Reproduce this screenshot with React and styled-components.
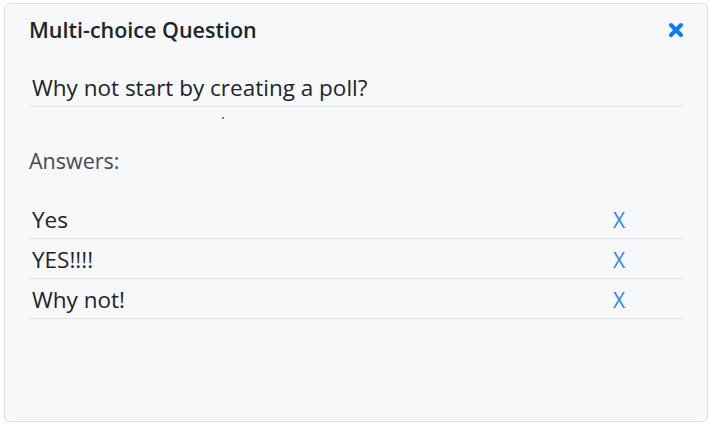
import styled, { createGlobalStyle } from "styled-components"

const GlobalStyle = createGlobalStyle`
  body {
    margin: 0;
    font-family: "Open Sans", "Noto Sans", sans-serif;
    color: #212529;
    background: #fff;
  }
  * {
    box-sizing: border-box;
  }
`

const Page = styled.div`
  padding: 3px 1px 4px 4px;
`

const Card = styled.div`
  height: 419px;
  background: #f7f8fa;
  border: 1px solid #dcdfe3;
  border-radius: 5px;
  padding: 11px 23px 0 24px;
  display: flex;
  flex-direction: column;
`

const Header = styled.div`
  display: flex;
  align-items: center;
  justify-content: space-between;
  height: 30px;
`

const Title = styled.h5`
  margin: 0;
  font-size: 21.5px;
  font-weight: 600;
  line-height: 30px;
  color: #212529;
`

const CloseButton = styled.button`
  border: 0;
  background: none;
  padding: 0;
  width: 16px;
  height: 16px;
  display: flex;
  cursor: pointer;
`

const QuestionInput = styled.input`
  margin-top: 23px;
  height: 39px;
  width: 100%;
  border: 0;
  border-bottom: 1px solid #e3e5e8;
  background: transparent;
  padding: 1px 3px 0;
  font: inherit;
  font-size: 22.5px;
  color: #212529;
  outline: none;
`

const Dot = styled.span`
  display: block;
  width: 2px;
  height: 2px;
  margin: 10px 0 0 193px;
  border-radius: 1px;
  background: #555;
`

const Label = styled.div`
  margin-top: 27px;
  font-size: 21.5px;
  line-height: 30px;
  color: #454b51;
`

const AnswerList = styled.div`
  margin-top: 23px;
  display: flex;
  flex-direction: column;
`

const AnswerRow = styled.div`
  display: grid;
  grid-template-columns: 1fr 130px;
  align-items: center;
  height: 40px;
  padding: 2px 0 0 3px;
  border-bottom: 1px solid #e3e5e8;
  font-size: 22.5px;
`

const RemoveButton = styled.button`
  border: 0;
  background: none;
  padding: 0;
  font: inherit;
  font-size: 21px;
  color: #2d84ff;
  justify-self: center;
  cursor: pointer;
`

const answers = ["Yes", "YES!!!!", "Why not!"]

export default function App() {
  return (
    <Page>
      <GlobalStyle />
      <Card>
        <Header>
          <Title>Multi-choice Question</Title>
          <CloseButton aria-label="Close">
            <svg width="16" height="16" viewBox="0 0 16 16">
              <path d="M3 3 L13 13 M13 3 L3 13" stroke="#0b7bff" strokeWidth="4" strokeLinecap="round" />
            </svg>
          </CloseButton>
        </Header>
        <QuestionInput defaultValue="Why not start by creating a poll?" />
        <Dot />
        <Label>Answers:</Label>
        <AnswerList>
          {answers.map((a) => (
            <AnswerRow key={a}>
              <span>{a}</span>
              <RemoveButton>X</RemoveButton>
            </AnswerRow>
          ))}
        </AnswerList>
      </Card>
    </Page>
  )
}
